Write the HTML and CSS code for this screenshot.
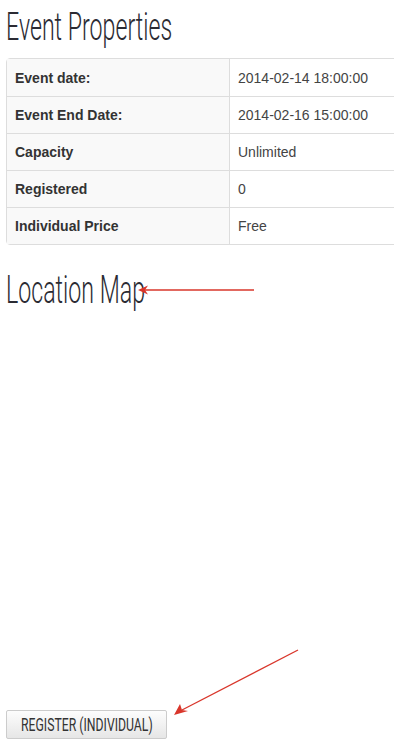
FILE: index.html
```html
<!DOCTYPE html>
<html lang="en">
<head>
  <meta charset="UTF-8">
  <meta name="viewport" content="width=device-width, initial-scale=1.0">
  <title>Event Properties</title>
  <link rel="stylesheet" href="styles.css">
</head>
<body>
  <div class="event">
    <h2 class="section-title"><span>Event Properties</span></h2>
    <div class="table-wrap">
      <table class="props">
        <tr><th>Event date:</th><td>2014-02-14 18:00:00</td></tr>
        <tr><th>Event End Date:</th><td>2014-02-16 15:00:00</td></tr>
        <tr><th>Capacity</th><td>Unlimited</td></tr>
        <tr><th>Registered</th><td>0</td></tr>
        <tr><th>Individual Price</th><td>Free</td></tr>
      </table>
    </div>

    <h2 class="section-title map-title"><span>Location Map</span></h2>
    <div class="map"></div>

    <button class="btn-register"><span>REGISTER (INDIVIDUAL)</span></button>
  </div>

  <!-- annotation arrows -->
  <svg class="arrow arrow-map" width="120" height="12" viewBox="0 0 120 12">
    <line x1="116" y1="6" x2="6" y2="6" stroke="#d9362b" stroke-width="1.3"/>
    <polygon points="0,6 10,1.5 7,6 10,10.5" fill="#d9362b"/>
  </svg>
  <svg class="arrow arrow-btn" width="130" height="70" viewBox="0 0 130 70">
    <line x1="126" y1="2" x2="10" y2="62" stroke="#d9362b" stroke-width="1.3"/>
    <polygon points="2,67 8,56 10,62 16,63" fill="#d9362b"/>
  </svg>
</body>
</html>
```

FILE: styles.css
```css
/* Base */
* { box-sizing: border-box; }
html, body { margin: 0; padding: 0; }
body {
  background: #fff; color: #333;
  font-family: "Liberation Sans", Arial, sans-serif; font-size: 14px;
  overflow: hidden; position: relative;
  width: 394px; height: 746px;
}
.event { padding: 5px 0 0 6px; }

/* Headings (condensed light look) */
.section-title {
  margin: 0; font-family: Roboto, "DejaVu Sans", sans-serif;
  font-weight: 300; font-size: 38px; line-height: 44px; color: #2b2b33;
  white-space: nowrap;
}
.section-title span { display: inline-block; transform: scaleX(0.61); transform-origin: 0 50%; }
.map-title { margin-top: 23px; }

/* Properties table */
.table-wrap { margin-top: 9px; overflow: hidden; }
.props {
  width: 460px;
  border-collapse: separate; border-spacing: 0;
  border: 1px solid #ddd; border-radius: 4px;
}
.props th, .props td {
  height: 37px; padding: 0 8px; text-align: left; vertical-align: middle;
  border-top: 1px solid #ddd; font-size: 14px;
}
.props tr:first-child th, .props tr:first-child td { border-top: none; }
.props th { width: 222px; background: #f9f9f9; font-weight: bold; color: #333; }
.props td { border-left: 1px solid #ddd; color: #444; }

/* Map placeholder */
.map { height: 398px; }

/* Button */
.btn-register {
  display: block; width: 161px; height: 29px; padding: 0 0 0 14px;
  border: 1px solid #ccc; border-radius: 2px;
  background: linear-gradient(#fdfdfd, #e6e6e6);
  font-family: Roboto, "DejaVu Sans", sans-serif; font-weight: 400;
  font-size: 18px; color: #333; white-space: nowrap; text-align: left;
}
.btn-register span { display: inline-block; transform: scaleX(0.68); transform-origin: 0 50%; }

/* Annotation arrows */
.arrow { position: absolute; }
.arrow-map { left: 138px; top: 284px; }
.arrow-btn { left: 172px; top: 648px; }
```
